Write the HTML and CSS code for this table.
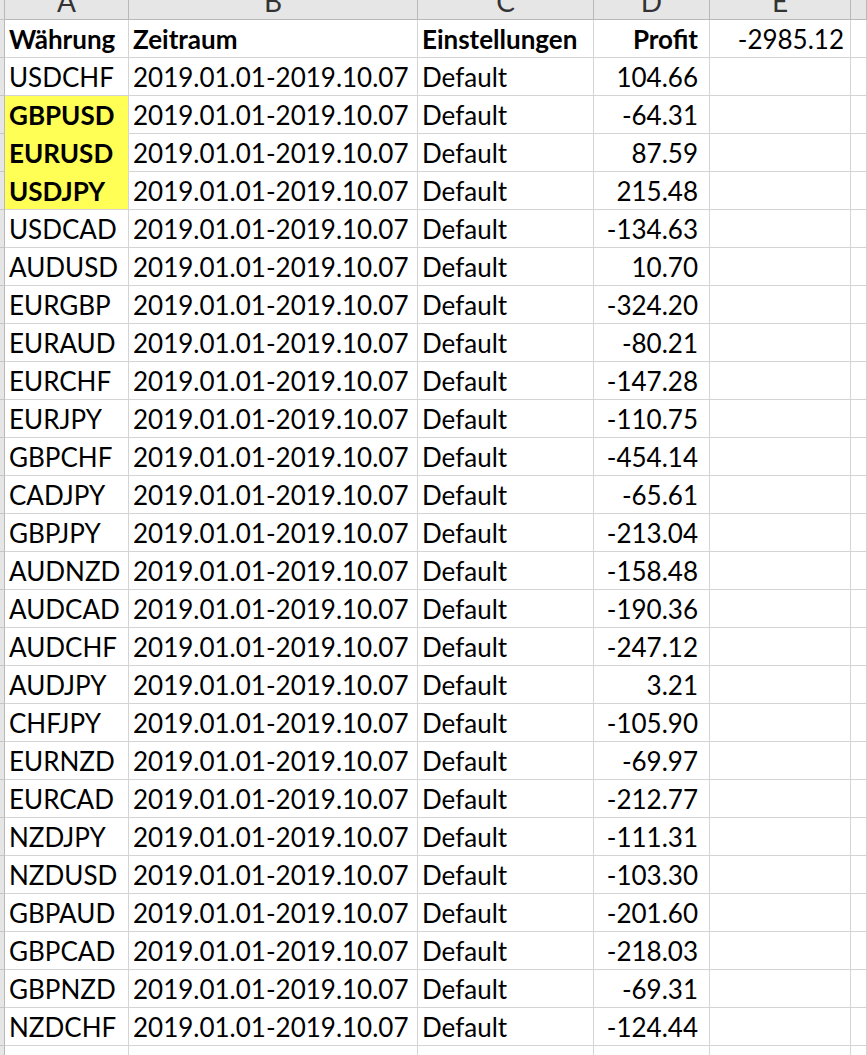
FILE: index.html
```html
<!DOCTYPE html>
<html lang="de">
<head>
<meta charset="utf-8">
<title>Tabelle</title>
<link rel="stylesheet" href="styles.css">
</head>
<body>
<div class="sheet">
  <div class="row head">
    <div class="rh"></div>
    <div class="c">A</div><div class="c">B</div><div class="c">C</div><div class="c">D</div><div class="c">E</div><div class="c"></div>
  </div>
  <div class="row">
    <div class="rh"></div>
    <div class="c b">Währung</div><div class="c b">Zeitraum</div><div class="c b">Einstellungen</div><div class="c b r pd">Profit</div><div class="c r pe">-2985.12</div><div class="c"></div>
  </div>
  <div class="row"><div class="rh"></div><div class="c">USDCHF</div><div class="c">2019.01.01-2019.10.07</div><div class="c">Default</div><div class="c r pd">104.66</div><div class="c"></div><div class="c"></div></div>
  <div class="row"><div class="rh"></div><div class="c b hl hl-open">GBPUSD</div><div class="c">2019.01.01-2019.10.07</div><div class="c">Default</div><div class="c r pd">-64.31</div><div class="c"></div><div class="c"></div></div>
  <div class="row"><div class="rh"></div><div class="c b hl hl-open">EURUSD</div><div class="c">2019.01.01-2019.10.07</div><div class="c">Default</div><div class="c r pd">87.59</div><div class="c"></div><div class="c"></div></div>
  <div class="row"><div class="rh"></div><div class="c b hl">USDJPY</div><div class="c">2019.01.01-2019.10.07</div><div class="c">Default</div><div class="c r pd">215.48</div><div class="c"></div><div class="c"></div></div>
  <div class="row"><div class="rh"></div><div class="c">USDCAD</div><div class="c">2019.01.01-2019.10.07</div><div class="c">Default</div><div class="c r pd">-134.63</div><div class="c"></div><div class="c"></div></div>
  <div class="row"><div class="rh"></div><div class="c">AUDUSD</div><div class="c">2019.01.01-2019.10.07</div><div class="c">Default</div><div class="c r pd">10.70</div><div class="c"></div><div class="c"></div></div>
  <div class="row"><div class="rh"></div><div class="c">EURGBP</div><div class="c">2019.01.01-2019.10.07</div><div class="c">Default</div><div class="c r pd">-324.20</div><div class="c"></div><div class="c"></div></div>
  <div class="row"><div class="rh"></div><div class="c">EURAUD</div><div class="c">2019.01.01-2019.10.07</div><div class="c">Default</div><div class="c r pd">-80.21</div><div class="c"></div><div class="c"></div></div>
  <div class="row"><div class="rh"></div><div class="c">EURCHF</div><div class="c">2019.01.01-2019.10.07</div><div class="c">Default</div><div class="c r pd">-147.28</div><div class="c"></div><div class="c"></div></div>
  <div class="row"><div class="rh"></div><div class="c">EURJPY</div><div class="c">2019.01.01-2019.10.07</div><div class="c">Default</div><div class="c r pd">-110.75</div><div class="c"></div><div class="c"></div></div>
  <div class="row"><div class="rh"></div><div class="c">GBPCHF</div><div class="c">2019.01.01-2019.10.07</div><div class="c">Default</div><div class="c r pd">-454.14</div><div class="c"></div><div class="c"></div></div>
  <div class="row"><div class="rh"></div><div class="c">CADJPY</div><div class="c">2019.01.01-2019.10.07</div><div class="c">Default</div><div class="c r pd">-65.61</div><div class="c"></div><div class="c"></div></div>
  <div class="row"><div class="rh"></div><div class="c">GBPJPY</div><div class="c">2019.01.01-2019.10.07</div><div class="c">Default</div><div class="c r pd">-213.04</div><div class="c"></div><div class="c"></div></div>
  <div class="row"><div class="rh"></div><div class="c">AUDNZD</div><div class="c">2019.01.01-2019.10.07</div><div class="c">Default</div><div class="c r pd">-158.48</div><div class="c"></div><div class="c"></div></div>
  <div class="row"><div class="rh"></div><div class="c">AUDCAD</div><div class="c">2019.01.01-2019.10.07</div><div class="c">Default</div><div class="c r pd">-190.36</div><div class="c"></div><div class="c"></div></div>
  <div class="row"><div class="rh"></div><div class="c">AUDCHF</div><div class="c">2019.01.01-2019.10.07</div><div class="c">Default</div><div class="c r pd">-247.12</div><div class="c"></div><div class="c"></div></div>
  <div class="row"><div class="rh"></div><div class="c">AUDJPY</div><div class="c">2019.01.01-2019.10.07</div><div class="c">Default</div><div class="c r pd">3.21</div><div class="c"></div><div class="c"></div></div>
  <div class="row"><div class="rh"></div><div class="c">CHFJPY</div><div class="c">2019.01.01-2019.10.07</div><div class="c">Default</div><div class="c r pd">-105.90</div><div class="c"></div><div class="c"></div></div>
  <div class="row"><div class="rh"></div><div class="c">EURNZD</div><div class="c">2019.01.01-2019.10.07</div><div class="c">Default</div><div class="c r pd">-69.97</div><div class="c"></div><div class="c"></div></div>
  <div class="row"><div class="rh"></div><div class="c">EURCAD</div><div class="c">2019.01.01-2019.10.07</div><div class="c">Default</div><div class="c r pd">-212.77</div><div class="c"></div><div class="c"></div></div>
  <div class="row"><div class="rh"></div><div class="c">NZDJPY</div><div class="c">2019.01.01-2019.10.07</div><div class="c">Default</div><div class="c r pd">-111.31</div><div class="c"></div><div class="c"></div></div>
  <div class="row"><div class="rh"></div><div class="c">NZDUSD</div><div class="c">2019.01.01-2019.10.07</div><div class="c">Default</div><div class="c r pd">-103.30</div><div class="c"></div><div class="c"></div></div>
  <div class="row"><div class="rh"></div><div class="c">GBPAUD</div><div class="c">2019.01.01-2019.10.07</div><div class="c">Default</div><div class="c r pd">-201.60</div><div class="c"></div><div class="c"></div></div>
  <div class="row"><div class="rh"></div><div class="c">GBPCAD</div><div class="c">2019.01.01-2019.10.07</div><div class="c">Default</div><div class="c r pd">-218.03</div><div class="c"></div><div class="c"></div></div>
  <div class="row"><div class="rh"></div><div class="c">GBPNZD</div><div class="c">2019.01.01-2019.10.07</div><div class="c">Default</div><div class="c r pd">-69.31</div><div class="c"></div><div class="c"></div></div>
  <div class="row"><div class="rh"></div><div class="c">NZDCHF</div><div class="c">2019.01.01-2019.10.07</div><div class="c">Default</div><div class="c r pd">-124.44</div><div class="c"></div><div class="c"></div></div>
  <div class="row"><div class="rh"></div><div class="c"></div><div class="c"></div><div class="c"></div><div class="c"></div><div class="c"></div><div class="c"></div></div>
</div>
</body>
</html>
```

FILE: styles.css
```css
html, body {
  margin: 0;
  padding: 0;
  background: #ffffff;
  overflow: hidden;
}

.sheet {
  width: 867px;
  height: 1055px;
  overflow: hidden;
  font-family: Lato, "Noto Sans", sans-serif;
  font-size: 26px;
  color: #000000;
}

.row {
  display: grid;
  grid-template-columns: 5px 124px 289px 176px 116px 141px 1fr;
  height: 38px;
}

.c, .rh {
  box-sizing: border-box;
  border-right: 1px solid #d4d4d4;
  border-bottom: 1px solid #d4d4d4;
  white-space: nowrap;
  overflow: hidden;
  line-height: 37px;
  padding: 1px 5px 0 4px;
}

.rh {
  background: #e6e6e6;
  border-right-color: #b9b9b9;
  border-bottom-color: #c6c6c6;
  padding: 0;
}

.head {
  height: 20px;
}

.head .c {
  background: #e6e6e6;
  border-right-color: #b9b9b9;
  border-bottom-color: #b9b9b9;
  text-align: center;
  color: #333333;
  font-size: 28px;
  line-height: 2px;
  padding: 0;
}

.b {
  font-weight: 700;
}

.r {
  text-align: right;
}

.pd {
  padding-right: 11px;
}

.pe {
  padding-right: 6px;
}

.hl {
  background: #ffff55;
}

.hl-open {
  border-bottom-color: #ffff55;
}
```
